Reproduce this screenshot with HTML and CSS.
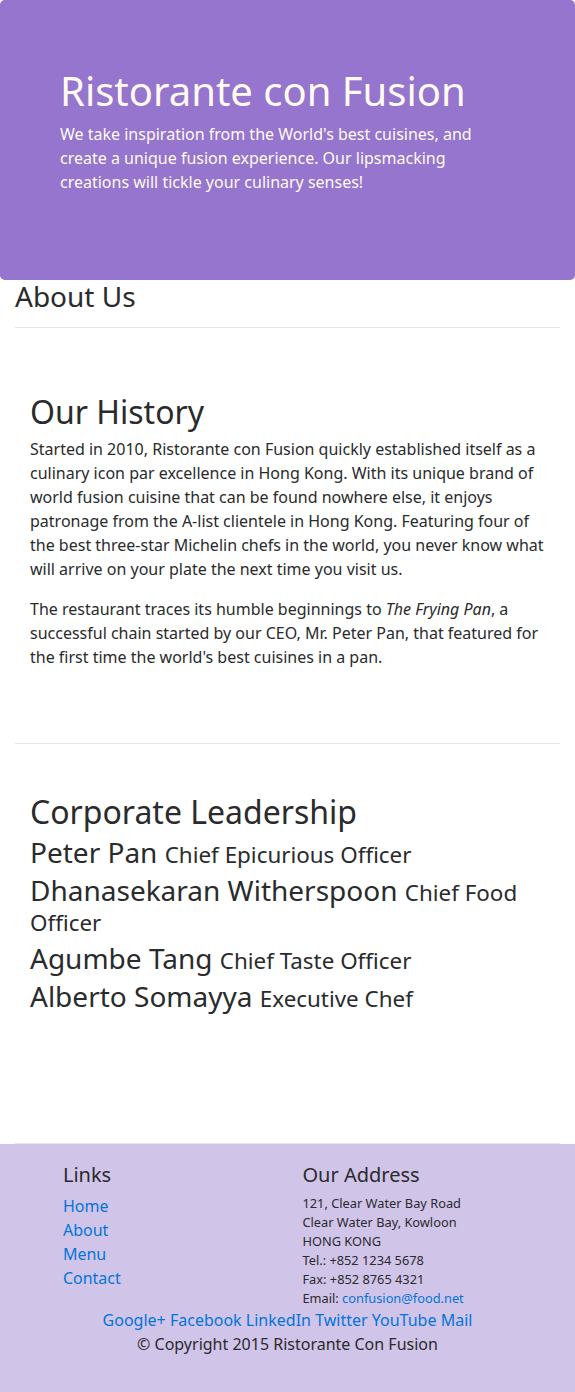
FILE: index.html
```html
<!DOCTYPE html>
<html lang="en">
<head>
<meta charset="utf-8">
<title>Ristorante con Fusion: About Us</title>
<link rel="stylesheet" href="styles.css">
</head>
<body>
<header class="jumbotron">
  <h1 class="brand-title">Ristorante con Fusion</h1>
  <p class="brand-text">We take inspiration from the World's best cuisines, and create a unique fusion experience. Our lipsmacking creations will tickle your culinary senses!</p>
</header>

<main class="container">
  <div class="row-header">
    <h3 class="page-title">About Us</h3>
    <hr class="divider">
  </div>

  <section class="row-content">
    <h2 class="section-title">Our History</h2>
    <p class="text">Started in 2010, Ristorante con Fusion quickly established itself as a culinary icon par excellence in Hong Kong. With its unique brand of world fusion cuisine that can be found nowhere else, it enjoys patronage from the A-list clientele in Hong Kong.  Featuring four of the best three-star Michelin chefs in the world, you never know what will arrive on your plate the next time you visit us.</p>
    <p class="text">The restaurant traces its humble beginnings to <em>The Frying Pan</em>, a successful chain started by our CEO, Mr. Peter Pan, that featured for the first time the world's best cuisines in a pan.</p>
  </section>

  <section class="row-content">
    <h2 class="section-title">Corporate Leadership</h2>
    <h3 class="leader">Peter Pan <small class="role">Chief Epicurious Officer</small></h3>
    <h3 class="leader">Dhanasekaran Witherspoon <small class="role">Chief Food Officer</small></h3>
    <h3 class="leader">Agumbe Tang <small class="role">Chief Taste Officer</small></h3>
    <h3 class="leader">Alberto Somayya <small class="role">Executive Chef</small></h3>
  </section>
</main>

<footer class="footer">
  <div class="footer-row">
    <div class="footer-col footer-links">
      <h5 class="footer-title">Links</h5>
      <ul class="link-list">
        <li><a class="link" href="#">Home</a></li>
        <li><a class="link" href="#">About</a></li>
        <li><a class="link" href="#">Menu</a></li>
        <li><a class="link" href="#">Contact</a></li>
      </ul>
    </div>
    <div class="footer-col footer-address">
      <h5 class="footer-title">Our Address</h5>
      <address class="address">
        121, Clear Water Bay Road<br>
        Clear Water Bay, Kowloon<br>
        HONG KONG<br>
        Tel.: +852 1234 5678<br>
        Fax: +852 8765 4321<br>
        Email: <a class="link" href="#">confusion@food.net</a>
      </address>
    </div>
  </div>
  <div class="social">
    <a class="link" href="#">Google+</a> <a class="link" href="#">Facebook</a> <a class="link" href="#">LinkedIn</a> <a class="link" href="#">Twitter</a> <a class="link" href="#">YouTube</a> <a class="link" href="#">Mail</a>
  </div>
  <p class="copyright">© Copyright 2015 Ristorante Con Fusion</p>
</footer>
</body>
</html>
```
FILE: styles.css
```css
html, body {
  margin: 0;
  padding: 0;
}

body {
  font-family: "Noto Sans", "Open Sans", sans-serif;
  font-size: 16px;
  line-height: 1.5;
  color: #292b2c;
  background: #ffffff;
}

h1, h2, h3, h5 {
  font-weight: 400;
  line-height: 1.1;
  margin: 0 0 8px;
}

.jumbotron {
  background: #9575cd;
  color: floralwhite;
  border-radius: 4.8px;
  padding: 69px 60px 70px;
  margin: 0;
}

.brand-title {
  font-size: 40px;
  margin-bottom: 9px;
}

.brand-text {
  margin: 0 0 16px;
}

.container {
  padding: 0 15px;
}

.page-title {
  font-size: 28px;
  padding-top: 1px;
}

.divider {
  border: 0;
  border-top: 1px solid rgba(0, 0, 0, 0.1);
  margin: 15px 0 16px;
  height: 0;
}

.row-content {
  box-sizing: border-box;
  min-height: 400px;
  padding: 50px 15px;
  border-bottom: 1px solid #e7e7e7;
}

.section-title {
  font-size: 32px;
}

.text {
  margin: 0 0 16px;
}

.leader {
  font-size: 28px;
  line-height: 30px;
}

.role {
  font-size: 80%;
  font-weight: 400;
  line-height: 1;
}

.footer {
  background: #d1c4e9;
  padding: 20px 0;
}

.footer-row {
  display: flex;
}

.footer-col {
  box-sizing: border-box;
  padding: 0 15px;
  margin-left: 8.3333%;
}

.footer-links {
  width: 33.3333%;
}

.footer-address {
  width: 50%;
}

.footer-title {
  font-size: 20px;
}

.link-list {
  list-style: none;
  margin: 0 0 16px;
  padding: 0;
}

.address {
  font-style: normal;
  font-size: 12.8px;
  line-height: 19px;
  margin: 0;
}

.link {
  color: #0275d8;
  text-decoration: none;
}

.social {
  text-align: center;
}

.copyright {
  text-align: center;
  margin: 0 0 16px;
}
```
